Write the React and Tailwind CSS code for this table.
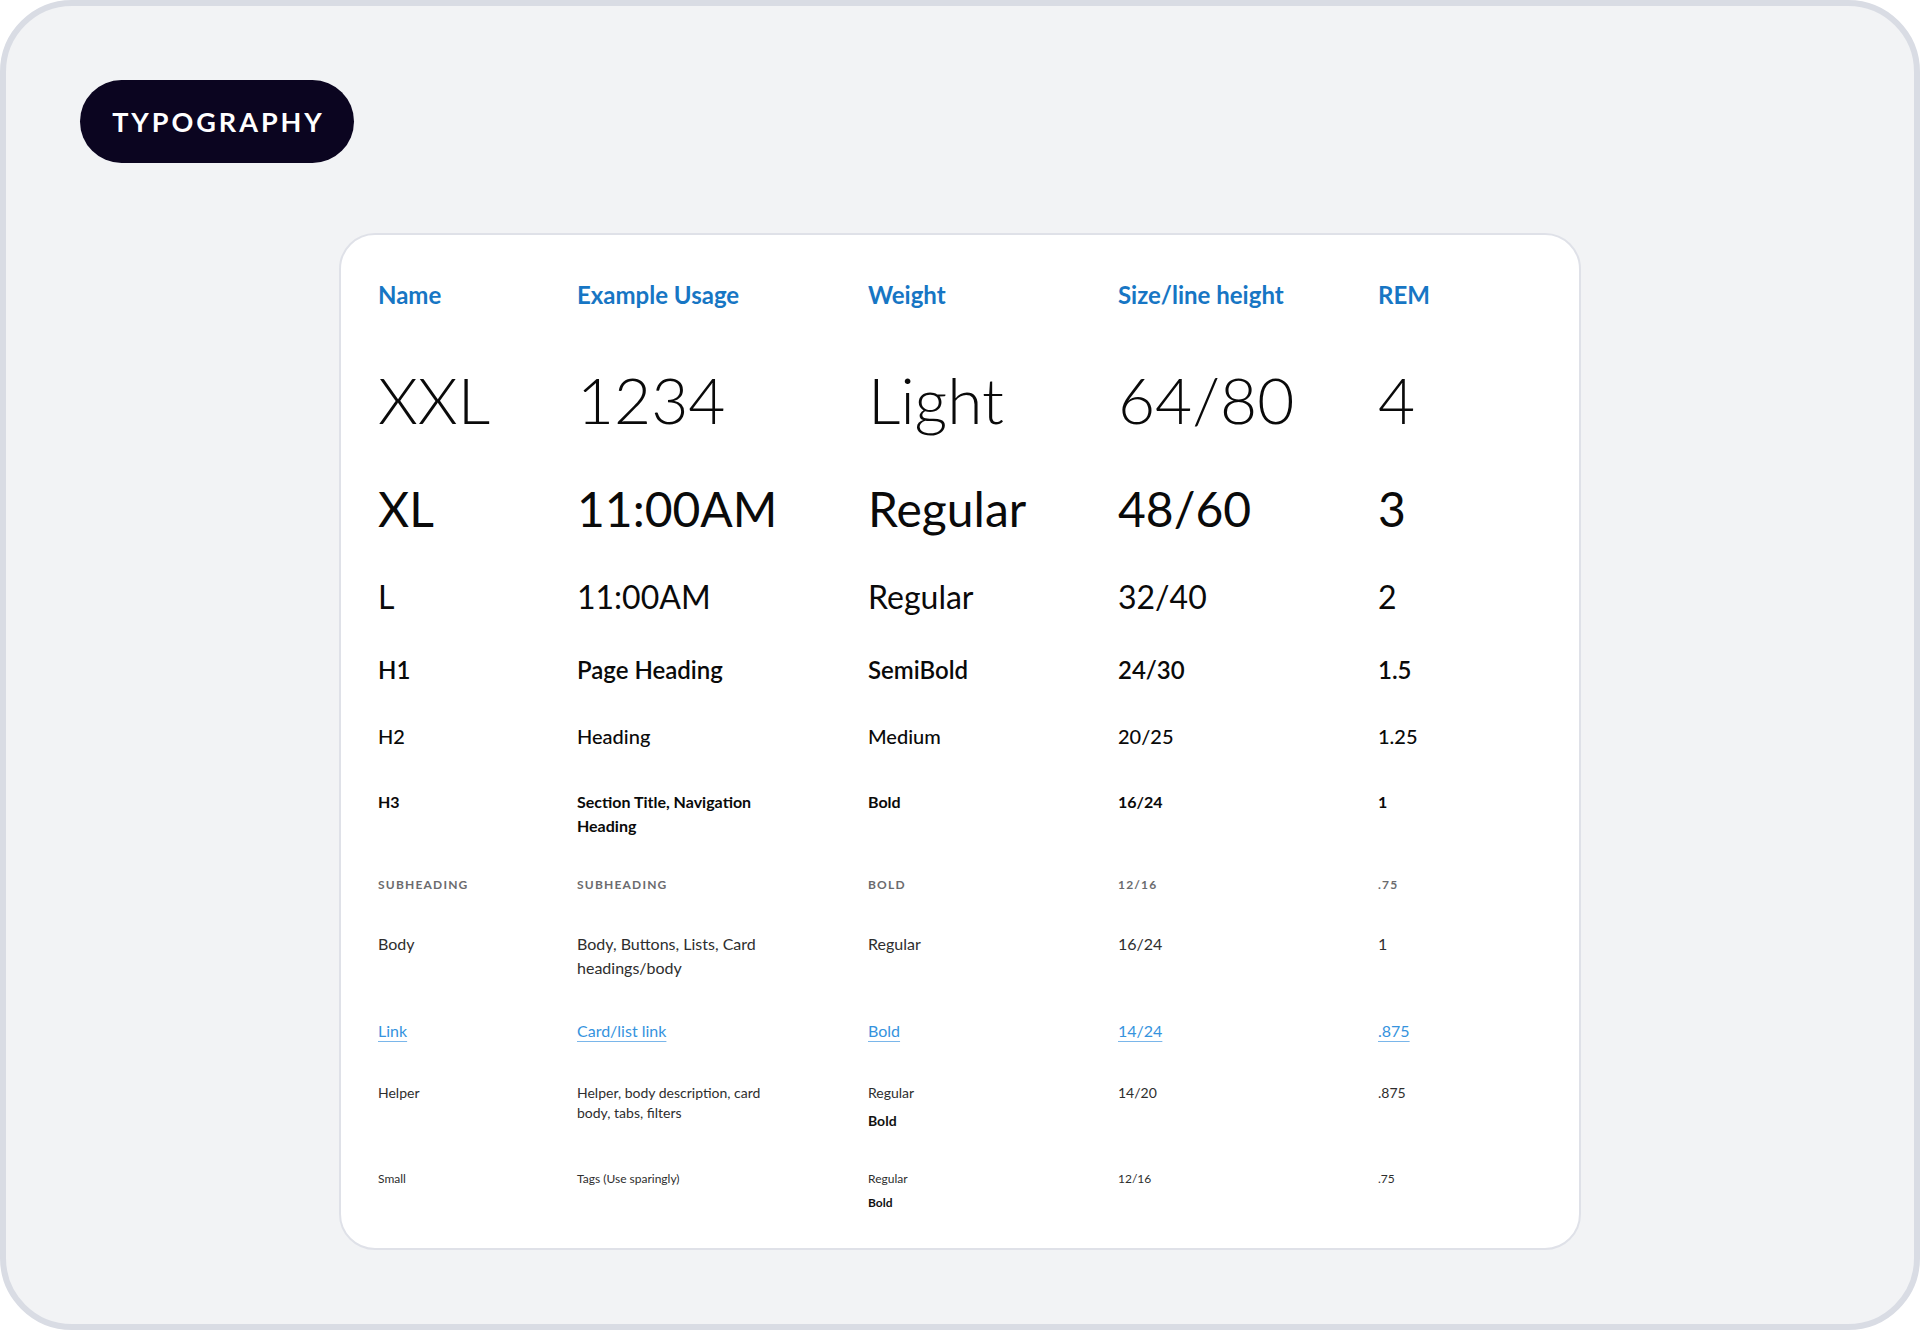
import React from "react";

const cols = "grid grid-cols-[199px_291px_250px_260px_1fr]";

function Row({ className = "", cells }) {
  return (
    <div className={`${cols} ${className}`}>
      {cells.map((c, i) => (
        <div key={i}>{c}</div>
      ))}
    </div>
  );
}

export default function App() {
  return (
    <div className="w-[1920px] h-[1330px] bg-white font-['Lato',sans-serif]">
      <div className="w-[1920px] h-[1330px] bg-[#f2f3f5] border-[6px] border-[#d9dce4] rounded-[72px] pt-[74px] pl-[74px] pr-[74px]">
        <div className="w-[274px] h-[83px] rounded-full bg-[#0b0520] flex items-center justify-center">
          <span className="text-white text-[27px] font-bold tracking-[0.11em] leading-none pl-[3px]">
            TYPOGRAPHY
          </span>
        </div>

        <div className="w-[1242px] mx-auto mt-[70px] bg-white border-2 border-[#dfe1e8] rounded-[36px] pt-[45px] pb-[37px] pl-[37px] flex flex-col gap-[39px] text-[#0a0a0a]">
          <Row
            className="text-[24px] leading-[30px] font-bold text-[#1776c4] mb-[11px]"
            cells={["Name", "Example Usage", "Weight", "Size/line height", "REM"]}
          />
          <Row
            className="text-[64px] leading-[80px] font-light"
            cells={["XXL", "1234", "Light", "64/80", "4"]}
          />
          <Row
            className="text-[48px] leading-[60px] font-normal"
            cells={["XL", "11:00AM", "Regular", "48/60", "3"]}
          />
          <Row
            className="text-[32px] leading-[40px] font-normal -mt-[1px]"
            cells={["L", "11:00AM", "Regular", "32/40", "2"]}
          />
          <Row
            className="text-[24px] leading-[30px] font-semibold -mt-[1px]"
            cells={["H1", "Page Heading", "SemiBold", "24/30", "1.5"]}
          />
          <Row
            className="text-[20px] leading-[25px] font-medium"
            cells={["H2", "Heading", "Medium", "20/25", "1.25"]}
          />
          <Row
            className="text-[16px] leading-[24px] font-bold mt-[2px]"
            cells={[
              "H3",
              <>
                Section Title, Navigation
                <br />
                Heading
              </>,
              "Bold",
              "16/24",
              "1",
            ]}
          />
          <Row
            className="text-[12px] leading-[16px] font-bold uppercase tracking-[0.1em] text-[#6b6b6e]"
            cells={["Subheading", "Subheading", "Bold", "12/16", ".75"]}
          />
          <Row
            className="text-[16px] leading-[24px] font-normal text-[#2e2e2e]"
            cells={[
              "Body",
              <>
                Body, Buttons, Lists, Card
                <br />
                headings/body
              </>,
              "Regular",
              "16/24",
              "1",
            ]}
          />
          <Row
            className="text-[16px] leading-[24px] font-normal text-[#3593de]"
            cells={["Link", "Card/list link", "Bold", "14/24", ".875"].map((t) => (
              <span className="underline underline-offset-[4px] decoration-1 decoration-[#7ab6ea]">{t}</span>
            ))}
          />
          <Row
            className="text-[14px] leading-[20px] font-normal text-[#2e2e2e] mt-[1px]"
            cells={[
              "Helper",
              <>
                Helper, body description, card
                <br />
                body, tabs, filters
              </>,
              <div className="flex flex-col gap-[8px]">
                <span>Regular</span>
                <span className="font-bold text-[#111]">Bold</span>
              </div>,
              "14/20",
              ".875",
            ]}
          />
          <Row
            className="text-[12px] leading-[16px] font-normal text-[#2e2e2e] mt-[1px]"
            cells={[
              "Small",
              "Tags (Use sparingly)",
              <div className="flex flex-col gap-[8px]">
                <span>Regular</span>
                <span className="font-bold text-[#111]">Bold</span>
              </div>,
              "12/16",
              ".75",
            ]}
          />
        </div>
      </div>
    </div>
  );
}
